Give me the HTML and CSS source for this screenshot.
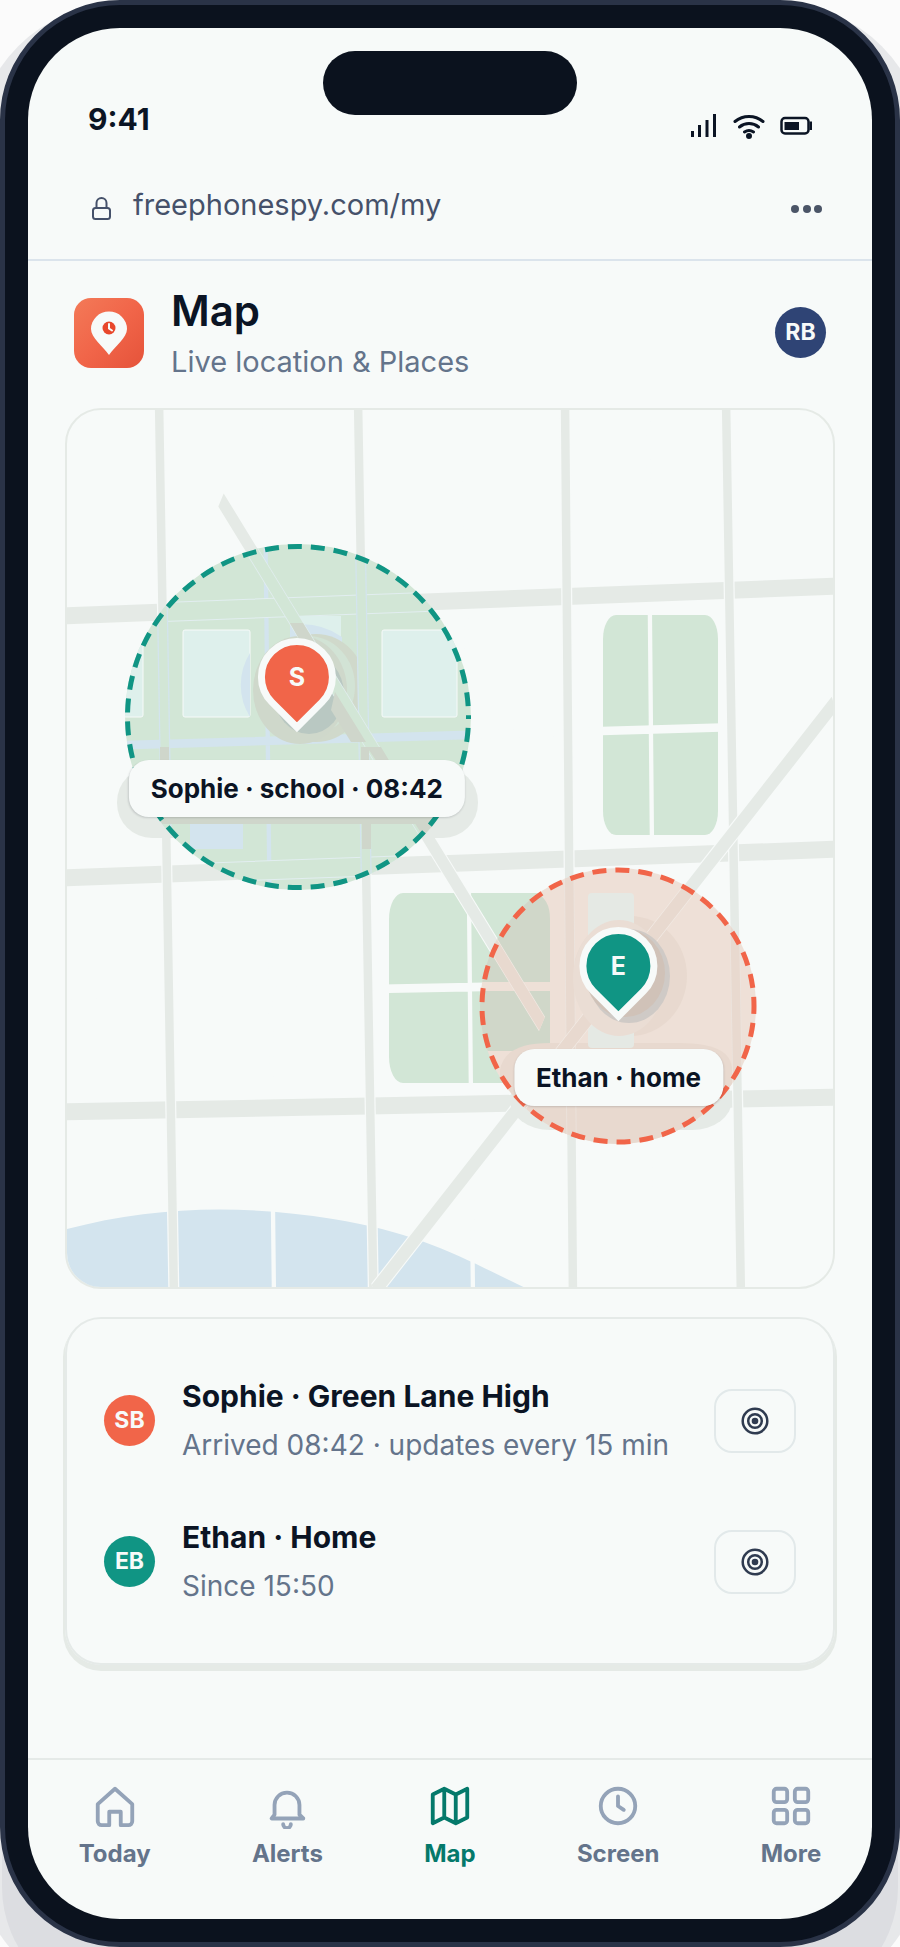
FILE: index.html
```html
<!DOCTYPE html>
<html lang="en">
<head>
  <meta charset="UTF-8" />
  <meta name="viewport" content="width=device-width, initial-scale=1.0"/>
  <title>Map - Live location &amp; Places</title>
  <link rel="stylesheet" href="styles.css">
</head>
<body>
  <div class="phone">
    <div class="screen">
      <div class="island"></div>

      <div class="status">
        <span class="time">9:41</span>
        <div class="status-icons">
          <svg width="28" height="28" viewBox="0 0 28 28" fill="#0b1424">
            <path d="M1 19h3v6H1zM8 13h3v12H8zM15.500 8h3v17h-3zM23 2h3v23h-3z"/>
          </svg>
          <svg width="34" height="28" viewBox="0 0 34 28" fill="none" stroke="#0b1424" stroke-width="3" stroke-linecap="round">
            <path d="M3 9.500a22 22 0 0 1 28 0M7.500 15a15 15 0 0 1 19 0M12.500 20a8 8 0 0 1 9 0"/>
            <circle cx="17" cy="24" r="2" fill="#0b1424" stroke-width="2"/>
          </svg>
          <svg width="32" height="28" viewBox="0 0 32 28" fill="none" stroke="#0b1424">
            <rect x="1.500" y="6" width="27" height="15.500" rx="3.500" stroke-width="2.500"/>
            <path d="M4.500 10h14.500v8H4.500zM29.500 9.500h2.500v8.500h-2.500z" fill="#0b1424" stroke="none"/>
          </svg>
        </div>
      </div>

      <div class="url-bar">
        <svg class="lock" width="26" height="28" viewBox="0 0 26 28" fill="none" stroke="#45516a" stroke-width="2">
          <rect x="5" y="13" width="17" height="11" rx="2.500"/>
          <path d="M8.500 13V8a5 5 0 0 1 10 0v5"/>
        </svg>
        <span class="url">freephonespy.com/my</span>
        <button class="dots" aria-label="Menu">
          <svg width="34" height="10" viewBox="0 0 34 10" fill="#4b5567">
            <circle cx="5" cy="5" r="4"/><circle cx="17" cy="5" r="4"/><circle cx="28" cy="5" r="4"/>
          </svg>
        </button>
      </div>

      <header class="top">
        <svg class="logo" width="70" height="70" viewBox="0 0 70 70">
          <defs>
            <linearGradient id="logo-bg" x1="0" y1="0" x2="1" y2="1">
              <stop offset="0" stop-color="#f37a58"/>
              <stop offset=".5" stop-color="#f16549"/>
              <stop offset="1" stop-color="#e5533a"/>
            </linearGradient>
          </defs>
          <rect width="70" height="70" rx="17" fill="url(#logo-bg)"/>
          <path d="M35 57C29 48 17 40 17 31a18 17.500 0 0 1 36 0c0 9-12 17-18 26z" fill="#f7faf9"/>
          <circle cx="35" cy="30" r="6.500" fill="#e8472b"/>
          <path d="M35 26v4.500l3 2" fill="none" stroke="#f7faf9" stroke-width="2" stroke-linecap="round"/>
        </svg>
        <div class="heading">
          <h1>Map</h1>
          <p>Live location &amp; Places</p>
        </div>
        <span class="avatar navy">RB</span>
      </header>

      <main>
        <section class="map">
          <svg class="canvas" viewBox="67 410 766 877">
            <defs>
              <clipPath id="school-clip"><circle cx="298" cy="717" r="173"/></clipPath>
              <clipPath id="home-clip"><circle cx="618" cy="1006" r="138"/></clipPath>
              <!-- road network, squashed to half height -->
              <path id="across" d="M60 308L840 293M60 439L840 424.500M60 556L840 548.500"/>
              <path id="down" d="M159 200L174 650M358 200L373.500 650M565 200L573 650M726 200L741 650"/>
              <path id="diag" d="M221 250L542 512M834 352L374 646"/>
              <path id="lanes" d="M60 373.500L840 362M60 497.500L840 490M264 200L274 650M464 200L473 650M648 200L656 650"/>
            </defs>

            <!-- parks and river -->
            <g fill="#d2e6d6">
              <rect x="603" y="615" width="115" height="220" rx="13" ry="24"/>
              <rect x="389" y="893" width="161" height="190" rx="14" ry="26"/>
            </g>
            <path d="M60 1231C150 1206 240 1204 333 1219S470 1262 534 1292H60z" fill="#d3e4ee"/>

            <g transform="scale(1 2)" fill="none">
              <use href="#lanes" stroke="#f7faf9" stroke-width="4.300"/>
              <use href="#across" stroke="#e5eae6" stroke-width="8.500"/>
              <use href="#down" stroke="#f7faf9" stroke-width="11"/>
              <use href="#down" stroke="#e5eae6" stroke-width="8.500"/>
              <use href="#diag" stroke="#f7faf9" stroke-width="10"/>
              <use href="#diag" stroke="#e5eae6" stroke-width="8.500"/>
            </g>

            <!-- label shadows -->
            <g fill="#e5eae6">
              <rect x="117" y="767" width="361" height="71" rx="35"/>
              <rect x="510" y="1070" width="222" height="60" rx="40"/>
            </g>

            <!-- school zone -->
            <g clip-path="url(#school-clip)">
              <rect x="120" y="540" width="360" height="360" fill="#d2e6d6"/>
              <path d="M190 816h53v33h-53z" fill="#d3e4ee"/>
              <g transform="scale(1 2)" fill="none" stroke="#d3e4ee">
                <path d="M60 373.500L840 362M264 200L274 650" stroke-width="4.300"/>
                <path d="M60 308L840 293M60 439L840 424.500" stroke="#e2eef0" stroke-width="10"/>
                <path d="M60 308L840 293M60 439L840 424.500" stroke="#d2e6d6" stroke-width="9"/>
              </g>
              <g fill="#def0ec" stroke="#f7faf9" stroke-width="1">
                <rect x="183" y="630" width="67" height="87" rx="2"/>
                <rect x="382" y="630" width="75" height="87" rx="2"/>
                <rect x="100" y="630" width="43" height="87" rx="2"/>
                <path d="M290 616h51v30h-51z" stroke="none"/>
              </g>
              <path d="M250 653a60 60 0 0 0 0 64zM290 625q30-4 52 12v80h-52z" fill="#d3e4ee"/>
              <ellipse cx="316" cy="688" rx="50" ry="54" fill="#d0d9cb"/>
              <ellipse cx="308" cy="686" rx="47" ry="50" fill="#d2e3d5"/>
              <ellipse cx="300" cy="690" rx="47" ry="54" fill="#cfd8cb"/>
              <ellipse cx="309" cy="694" rx="35" ry="40" fill="#b9c8c2"/>
              <g transform="scale(1 2)" fill="none">
                <use href="#down" stroke="#d3e4ee" stroke-width="11"/>
                <use href="#down" stroke="#d2e6d6" stroke-width="8.500"/>
                <path d="M221 250L542 512" stroke="#e2eef0" stroke-width="9.500"/>
                <path d="M221 250L542 512" stroke="#d2e6d6" stroke-width="8.500"/>
              </g>
              <path d="M290 623h13l25 41h-15zM335 692l31 50h-15l-20-32zM160 747h9v15h-9zM361 747h8v15h-8zM367 747h14l9 15h-13zM130 817h310v7H130zM362 817h9v32h-9zM411 817h14l25 40h-14z" fill="#cfd6cb"/>
            </g>
            <circle class="ring" cx="298" cy="717" r="170.500" stroke="#109584" stroke-dashoffset="12"/>

            <!-- home zone -->
            <g clip-path="url(#home-clip)">
              <rect x="478" y="866" width="282" height="282" fill="#eee0d7"/>
              <path d="M470 893h65q15 5 15 26v63h-80zM470 991h80v60h-80z" fill="#d0d7c9"/>
              <path d="M500 1107V1070q4-27 50-27h130q52 0 52 27v80H500z" fill="#e8d9cf"/>
              <ellipse cx="630" cy="976" rx="57" ry="60" fill="#e8d9cf"/>
              <rect x="588" y="893" width="46" height="155" rx="4" fill="#e5e9e4"/>
              <g transform="scale(1 2)" fill="none">
                <use href="#down" stroke="#ece4de" stroke-width="10"/>
                <use href="#down" stroke="#e8d9cf" stroke-width="8.500"/>
                <use href="#diag" stroke="#f1e9e3" stroke-width="9.500"/>
                <use href="#diag" stroke="#e8d9cf" stroke-width="8.500"/>
              </g>
              <ellipse cx="619" cy="978" rx="46" ry="58" fill="#eaddd4"/>
              <ellipse cx="629" cy="976" rx="41" ry="47" fill="#cfcac6"/>
              <ellipse cx="625" cy="973" rx="40" ry="44" fill="#d0c2b8"/>
            </g>
            <circle class="ring" cx="618" cy="1006" r="136" stroke="#f16549" stroke-dashoffset="6"/>
          </svg>

          <div class="place school">
            <div class="pin coral"><span>S</span></div>
            <div class="tag">Sophie · school · 08:42</div>
          </div>
          <div class="place home">
            <div class="pin teal"><span>E</span></div>
            <div class="tag">Ethan · home</div>
          </div>
        </section>

        <section class="card">
          <div class="row">
            <span class="avatar coral">SB</span>
            <div class="info">
              <strong>Sophie · Green Lane High</strong>
              <span>Arrived 08:42 · updates every 15 min</span>
            </div>
            <button class="locate" aria-label="Locate Sophie">
              <svg width="28" height="28" viewBox="0 0 28 28" fill="none" stroke="#2f3b50" stroke-width="2.500">
                <circle cx="14" cy="14" r="12.300"/><circle cx="14" cy="14" r="6.800"/><circle cx="14" cy="14" r="3.300" fill="#2f3b50" stroke="none"/>
              </svg>
            </button>
          </div>
          <div class="row">
            <span class="avatar teal">EB</span>
            <div class="info">
              <strong>Ethan · Home</strong>
              <span>Since 15:50</span>
            </div>
            <button class="locate" aria-label="Locate Ethan">
              <svg width="28" height="28" viewBox="0 0 28 28" fill="none" stroke="#2f3b50" stroke-width="2.500">
                <circle cx="14" cy="14" r="12.300"/><circle cx="14" cy="14" r="6.800"/><circle cx="14" cy="14" r="3.300" fill="#2f3b50" stroke="none"/>
              </svg>
            </button>
          </div>
        </section>
      </main>

      <nav class="tabs">
        <a href="#today">
          <svg viewBox="0 0 24 24"><path d="M3 11l9-8 9 8v9a2 2 0 0 1-2 2h-4v-7H9v7H5a2 2 0 0 1-2-2z"/></svg>
          Today
        </a>
        <a href="#alerts">
          <svg viewBox="0 0 24 24"><path d="M18.500 16.500V11.500a6.500 6.500 0 0 0-13 0v5l-1.500 2h16.500zM10 21.500a2 2 0 0 0 4 0"/></svg>
          Alerts
        </a>
        <a href="#map" class="active">
          <svg viewBox="0 0 24 24"><path d="M3 6l6-3 6 3 6-3v15l-6 3-6-3-6 3zM9 3v15M15 6v15"/></svg>
          Map
        </a>
        <a href="#screen">
          <svg viewBox="0 0 24 24"><circle cx="12" cy="12" r="9"/><path d="M12 7v5l3 2"/></svg>
          Screen
        </a>
        <a href="#more">
          <svg viewBox="0 0 24 24"><rect x="3" y="3" width="7" height="7" rx="1.500"/><rect x="14" y="3" width="7" height="7" rx="1.500"/><rect x="3" y="14" width="7" height="7" rx="1.500"/><rect x="14" y="14" width="7" height="7" rx="1.500"/></svg>
          More
        </a>
      </nav>
    </div>
  </div>
</body>
</html>
```

FILE: styles.css
```css
* {
  box-sizing: border-box;
}
body {
  margin: 0;
  background: #fbfbfb;
  color: #0b1424;
  font-family: Inter, "Liberation Sans", sans-serif;
  font-size: 28px;
}
h1, p {
  margin: 0;
}
svg {
  display: block;
  flex: none;
}
button {
  background: none;
  border: none;
  padding: 0;
  cursor: pointer;
}
.phone {
  display: flex;
  min-height: 100vh;
  padding: 23px;
  background: #0b121e;
  border: 5px solid #2a3347;
  border-radius: 120px;
  box-shadow: 0 60px 0 -2px #dcdde1, 0 28px 0 24px #e7e8ea;
}
.screen {
  position: relative;
  flex: 1;
  display: flex;
  flex-direction: column;
  background: #f7faf9;
  border-radius: 92px;
  overflow: hidden;
}
.island {
  position: absolute;
  top: 23px;
  left: 50%;
  width: 254px;
  height: 64px;
  border-radius: 32px;
  background: #0b121e;
  transform: translateX(-50%);
}

/* status + address */
.status {
  display: flex;
  justify-content: space-between;
  align-items: flex-end;
  height: 112px;
  padding: 0 60px;
}
.time {
  font-weight: 700;
  font-size: 30px;
  line-height: 42px;
}
.status-icons {
  display: flex;
  gap: 14px;
}
.url-bar {
  display: flex;
  align-items: center;
  height: 121px;
  padding: 18px 48px 8px 60px;
  border-bottom: 2px solid #dbe4ec;
  color: #45516a;
}
.lock {
  margin-top: 8px;
}
.url {
  flex: 1;
  margin-left: 19px;
  font-size: 29px;
  line-height: 40px;
}
.dots {
  margin-top: 8px;
}

.top {
  display: flex;
  align-items: center;
  gap: 27px;
  height: 147px;
  padding: 0 46px 4px;
}
.heading {
  flex: 1;
}
.heading h1 {
  font-size: 42px;
  font-weight: 600;
  line-height: 58px;
}
.heading p {
  color: #64748b;
  font-size: 29px;
  line-height: 44px;
}
.avatar {
  flex: none;
  width: 51px;
  height: 51px;
  border-radius: 50%;
  color: #f7faf9;
  font-size: 23px;
  font-weight: 700;
  line-height: 50px;
  text-align: center;
}
.navy {
  background: #2f4475;
}
.coral {
  background: #f16549;
}
.teal {
  background: #109584;
}

main {
  display: flex;
  flex-direction: column;
  gap: 28px;
  padding: 0 37px;
}

/* map */
.map {
  position: relative;
  border: 2px solid #e5eae6;
  border-radius: 36px;
  overflow: hidden;
}
.canvas {
  width: 100%;
  height: auto;
}
.ring {
  fill: none;
  stroke-width: 5;
  stroke-dasharray: 14 9;
}
.place {
  position: absolute;
  display: flex;
  flex-direction: column;
  align-items: center;
  gap: 44px;
  transform: translateX(-50%);
}
.school {
  left: 30%;
  top: 26%;
}
.home {
  left: 72%;
  top: 59%;
}
.pin {
  width: 78px;
  height: 78px;
  border: 7px solid #f7faf9;
  border-radius: 50% 50% 0 50%;
  transform: rotate(45deg);
}
.pin span {
  display: block;
  color: #f7faf9;
  font-size: 25px;
  font-weight: 700;
  line-height: 64px;
  text-align: center;
  transform: rotate(-45deg);
}
.tag {
  padding: 0 22px;
  background: #f7faf9;
  border-radius: 20px;
  box-shadow: 0 1px 2px rgba(11, 20, 36, .15);
  font-size: 26px;
  font-weight: 700;
  line-height: 57px;
  white-space: nowrap;
}

/* people */
.card {
  padding: 31px 37px;
  border: 2px solid #e5eae8;
  border-radius: 36px;
  box-shadow: 0 4px 0 2px #e5eae6;
}
.row {
  display: flex;
  align-items: center;
  gap: 27px;
  min-height: 141px;
}
.info {
  flex: 1;
  display: flex;
  flex-direction: column;
  line-height: 49px;
}
.info strong {
  font-size: 30px;
  font-weight: 700;
}
.info span {
  color: #64748b;
}
.locate {
  display: flex;
  align-items: center;
  justify-content: center;
  width: 82px;
  height: 64px;
  border: 2px solid #e2e9ea;
  border-radius: 18px;
}

/* bottom tabs */
.tabs {
  display: flex;
  justify-content: space-around;
  height: 161px;
  margin-top: auto;
  padding-top: 23px;
  border-top: 2px solid #e5eae8;
}
.tabs a {
  display: flex;
  flex-direction: column;
  align-items: center;
  gap: 10px;
  color: #64748b;
  font-size: 24px;
  font-weight: 700;
  line-height: 30px;
  text-decoration: none;
}
.tabs svg {
  width: 46px;
  height: 46px;
  fill: none;
  stroke: #94a3b8;
  stroke-width: 2;
  stroke-linecap: round;
  stroke-linejoin: round;
}
.tabs .active {
  color: #04796b;
}
.tabs .active svg {
  stroke: #04796b;
}
```
